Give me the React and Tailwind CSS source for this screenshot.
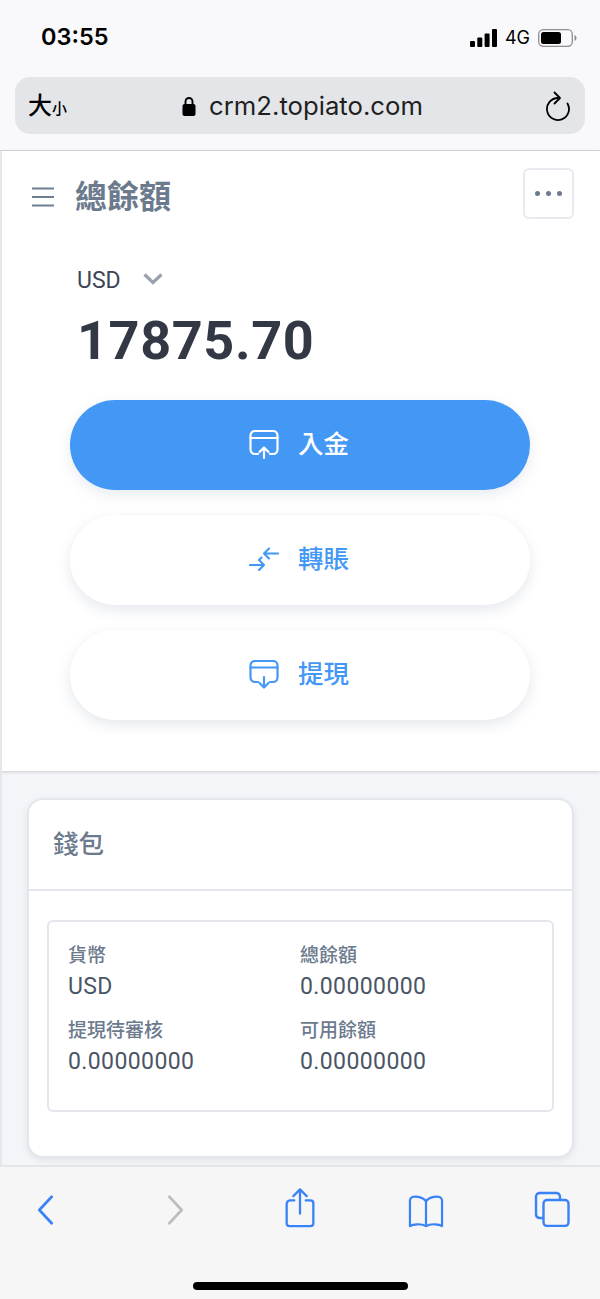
import React from "react";

const sans = "font-['Roboto','Noto_Sans_CJK_TC',sans-serif]";

function CardUp({ className }) {
  return (
    <svg className={className} width="30" height="30" viewBox="0 0 30 30" fill="none" stroke="currentColor" strokeWidth="2.2" strokeLinecap="round" strokeLinejoin="round">
      <path d="M9 24H6a4.500 4.500 0 0 1-4.500-4.500V5.500A4.500 4.500 0 0 1 6 1h18a4.500 4.500 0 0 1 4.500 4.500v14A4.500 4.500 0 0 1 24 24h-3" />
      <path d="M1.500 8h27" />
      <path d="M15 28V18M10.500 22l4.500-4.500 4.500 4.500" />
    </svg>
  );
}
function CardDown({ className }) {
  return (
    <svg className={className} width="30" height="30" viewBox="0 0 30 30" fill="none" stroke="currentColor" strokeWidth="2.2" strokeLinecap="round" strokeLinejoin="round">
      <path d="M9 22H6a4.500 4.500 0 0 1-4.500-4.500V5.500A4.500 4.500 0 0 1 6 1h18a4.500 4.500 0 0 1 4.500 4.500v12A4.500 4.500 0 0 1 24 22h-3" />
      <path d="M1.500 7.500h27" />
      <path d="M15 17v10M10.500 23l4.500 4.500 4.500-4.500" />
    </svg>
  );
}
function Swap({ className }) {
  return (
    <svg className={className} width="30" height="30" viewBox="0 0 30 30" fill="none" stroke="currentColor" strokeWidth="2.1" strokeLinecap="round" strokeLinejoin="round">
      <path d="M29 8.500H15M20 3.500l-5 5 5 5" />
      <path d="M1 20h14M10 15l5 5-5 5" />
      <path d="M10.500 14.500l2-2" />
    </svg>
  );
}

function ActionButton({ icon, label, primary }) {
  return (
    <button
      className={
        "flex h-[90px] w-full items-center justify-center gap-[19px] rounded-[45px] pr-[2px] text-[25.500px] font-medium " +
        (primary
          ? "bg-[#4498f5] text-white shadow-[0_5px_14px_rgba(70,90,130,0.12)]"
          : "bg-white text-[#4498f5] shadow-[0_5px_14px_rgba(70,90,130,0.14)]")
      }
    >
      {icon}
      <span className="mb-[2px]">{label}</span>
    </button>
  );
}

function Stat({ label, value }) {
  return (
    <div className="flex h-[75px] flex-col">
      <div className="text-[19px] leading-[26px] font-medium text-[#6b7a8d]">{label}</div>
      <div className="mt-[4px] text-[23px] leading-[28px] text-[#4a5565] tracking-[0.4px]">{value}</div>
    </div>
  );
}

export default function App() {
  return (
    <div className={"flex h-[1299px] w-[600px] flex-col overflow-hidden bg-[#f4f5f8] " + sans}>
      {/* Safari top chrome */}
      <div className="flex h-[151px] shrink-0 flex-col border-b border-[#d6d6d9] bg-[#f9f9fb]">
        <div className="flex h-[77px] items-start justify-between pl-[41px] pr-[23px] pt-[22px]">
          <span className="font-['Inter',sans-serif] text-[23.500px] leading-[30px] font-semibold text-black">03:55</span>
          <div className="flex items-center gap-[8px] pt-[6px]">
            <svg width="27" height="18" viewBox="0 0 27 18" fill="black">
              <rect x="0" y="12" width="5" height="6" rx="1" />
              <rect x="7.3" y="8.5" width="5" height="9.5" rx="1" />
              <rect x="14.6" y="4.5" width="5" height="13.5" rx="1" />
              <rect x="22" y="0" width="5" height="18" rx="1" />
            </svg>
            <span className="font-['Inter',sans-serif] text-[18px] leading-[20px] text-black">4G</span>
            <svg width="39" height="18" viewBox="0 0 39 18" fill="none">
              <rect x="0.7" y="0.7" width="33.6" height="16.6" rx="4.5" stroke="#8e8e90" strokeWidth="1.3" />
              <rect x="3" y="3" width="20" height="12" rx="2.5" fill="black" />
              <path d="M36.5 6c1.2.5 2 1.6 2 3s-.8 2.5-2 3z" fill="#8e8e90" />
            </svg>
          </div>
        </div>
        <div className="mx-[15px] flex h-[57px] items-center justify-between rounded-[15px] bg-[#e4e5e8] pl-[13px] pr-[14px]">
          <div className="flex w-[60px] items-baseline font-['Noto_Sans_CJK_TC',sans-serif] font-medium text-black">
            <span className="text-[24px] leading-[30px]">大</span>
            <span className="text-[15px] leading-[30px]">小</span>
          </div>
          <div className="flex items-center gap-[13px] pr-[28px]">
            <svg width="14" height="22" viewBox="0 0 14 22" fill="none">
              <path d="M3.5 10V6.5a3.5 3.5 0 0 1 7 0V10" stroke="black" strokeWidth="1.9" />
              <rect x="0.5" y="9" width="13" height="12" rx="2" fill="black" />
            </svg>
            <span className="font-['Inter',sans-serif] text-[25.700px] leading-[30px] text-[#1f1f21]">crm2.topiato.com</span>
          </div>
          <svg width="26" height="30" viewBox="0 0 26 30" fill="none" stroke="black" strokeWidth="1.8" strokeLinecap="round" strokeLinejoin="round">
            <path d="M22.500 12.500A11 11 0 1 1 13 7" />
            <path d="M9.500 1.500l5.500 5.500-5.500 5.500" />
          </svg>
        </div>
      </div>

      {/* Balance panel */}
      <div className="h-[620px] shrink-0 border-l-2 border-[#e5e7ec] bg-white shadow-[0_1px_3px_rgba(60,70,90,0.22)]">
        <div className="flex items-start justify-between pl-[29px] pr-[26px] pt-[17px]">
          <div className="flex items-center gap-[20px] pt-[9px]">
            <svg width="24" height="20" viewBox="0 0 24 20" stroke="#6f7e90" strokeWidth="2">
              <path d="M1 1.5h22M1 10h22M1 18.5h22" />
            </svg>
            <h1 className="text-[32px] leading-[40px] font-bold text-[#6b7a8d]">總餘額</h1>
          </div>
          <button className="flex h-[51px] w-[51px] items-center justify-center gap-[6px] rounded-[6px] border-2 border-[#e8eaf0] bg-white">
            <span className="h-[5px] w-[5px] rounded-full bg-[#6b7a8d]" />
            <span className="h-[5px] w-[5px] rounded-full bg-[#6b7a8d]" />
            <span className="h-[5px] w-[5px] rounded-full bg-[#6b7a8d]" />
          </button>
        </div>
        <div className="pl-[75px] pt-[48px]">
          <div className="flex items-center gap-[22px]">
            <span className="text-[23px] leading-[28px] text-[#3c4656]">USD</span>
            <svg width="20" height="12" viewBox="0 0 20 12" className="mb-[4px]" fill="none" stroke="#9aa2ae" strokeWidth="3.2">
              <path d="M1.5 1.5 10 9.5l8.5-8" />
            </svg>
          </div>
          <div className="mt-[14px] text-[54px] leading-[64px] font-bold text-[#323944] tracking-[0.6px]">17875.70</div>
        </div>
        <div className="flex flex-col gap-[25px] pl-[68px] pr-[70px] pt-[27px]">
          <ActionButton primary label="入金" icon={<CardUp />} />
          <ActionButton label="轉賬" icon={<Swap />} />
          <ActionButton label="提現" icon={<CardDown />} />
        </div>
      </div>

      {/* Wallet */}
      <div className="min-h-0 flex-1 overflow-hidden border-l-2 border-[#e5e7ec] pl-[25px] pr-[26px] pt-[27px]">
        <div className="h-[360px] w-[547px] rounded-[16px] border-2 border-[#e3e6ec] bg-white shadow-[0_2px_6px_rgba(60,70,90,0.10)]">
          <div className="flex h-[91px] items-center border-b-2 border-[#e3e6ec] pl-[24px] text-[25.500px] font-medium text-[#6b7a8d]">錢包</div>
          <div className="pl-[18px] pr-[18px] pt-[29px]">
            <div className="grid h-[192px] grid-cols-[232px_1fr] content-start rounded-[6px] border-2 border-[#e3e6ec] pl-[19px] pt-[21px]">
              <Stat label="貨幣" value="USD" />
              <Stat label="總餘額" value="0.00000000" />
              <Stat label="提現待審核" value="0.00000000" />
              <Stat label="可用餘額" value="0.00000000" />
            </div>
          </div>
        </div>
      </div>

      {/* Safari bottom bar */}
      <div className="relative h-[134px] shrink-0 border-t-2 border-[#e4e5e9] bg-[#f6f6f7]">
        <div className="flex items-start pl-[37px] pt-[10px]">
          <svg width="17" height="30" viewBox="0 0 18 34" className="mt-[18px]" fill="none" stroke="#3a82f7" strokeWidth="3" strokeLinecap="round" strokeLinejoin="round">
            <path d="M16 2 2 17l14 15" />
          </svg>
          <svg width="17" height="30" viewBox="0 0 18 34" className="ml-[113px] mt-[18px]" fill="none" stroke="#bdbdbf" strokeWidth="3" strokeLinecap="round" strokeLinejoin="round">
            <path d="M2 2l14 15L2 32" />
          </svg>
          <svg width="32" height="40" viewBox="0 0 32 42" className="ml-[100px] mt-[11px]" fill="none" stroke="#3a82f7" strokeWidth="2.4" strokeLinecap="round" strokeLinejoin="round">
            <path d="M10 13H5a4 4 0 0 0-3 3v21a3 3 0 0 0 3 3h22a3 3 0 0 0 3-3V16a3 3 0 0 0-3-3h-5" />
            <path d="M16 27V2M9 8.5 16 1.5l7 7" />
          </svg>
          <svg width="38" height="33" viewBox="0 0 38 36" className="ml-[91px] mt-[18px]" fill="none" stroke="#3a82f7" strokeWidth="2.4" strokeLinecap="round" strokeLinejoin="round">
            <path d="M19 7C16 2 5 0 2.5 3.5 2 4 1.500 5 1.500 6v28c3-2.500 13-3 17.500 0 4.500-3 14.500-2.500 17.500 0V6c0-1-.5-2-1-2.500C33 0 22 2 19 7z" />
            <path d="M19 7v25" />
          </svg>
          <svg width="36" height="36" viewBox="0 0 36 36" className="ml-[89px] mt-[14px]" fill="none" stroke="#3a82f7" strokeWidth="2.4" strokeLinejoin="round">
            <path d="M26 8V5a4 4 0 0 0-3-3H5a4 4 0 0 0-3 3v18a4 4 0 0 0 3 4h4" />
            <rect x="9.500" y="9" width="25" height="26" rx="3.500" />
          </svg>
        </div>
        <div className="absolute bottom-[9px] left-[193px] h-[8px] w-[215px] rounded-full bg-black" />
      </div>
    </div>
  );
}
